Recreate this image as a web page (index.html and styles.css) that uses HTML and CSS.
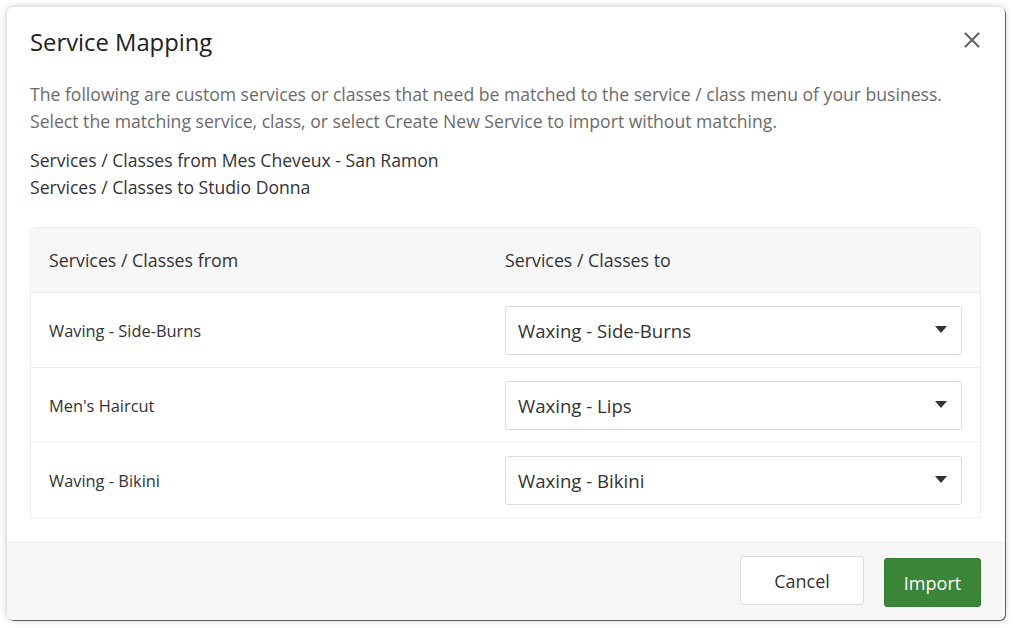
FILE: index.html
```html
<!DOCTYPE html>
<html>
<head>
  <title>Service Mapping</title>
  <link rel="stylesheet" href="styles.css">
</head>
<body>

  <div class="modal">
    <div class="modal-header">
      <h2>Service Mapping</h2>
      <button class="close" type="button" aria-label="Close">
        <svg width="16" height="16" viewBox="0 0 16 16"><path d="M1.5 1.5 L14.5 14.5 M14.5 1.5 L1.5 14.5" stroke="#666" stroke-width="2.2" stroke-linecap="round"/></svg>
      </button>
    </div>

    <div class="modal-body">
      <p class="intro">The following are custom services or classes that need be matched to the service / class menu of your business. Select the matching service, class, or select Create New Service to import without matching.</p>
      <p class="source">Services / Classes from Mes Cheveux - San Ramon<br>Services / Classes to Studio Donna</p>

      <div class="map-table">
        <div class="map-head">
          <div>Services / Classes from</div>
          <div>Services / Classes to</div>
        </div>
        <div class="map-row">
          <div>Waving - Side-Burns</div>
          <div><div class="select">Waxing - Side-Burns <span class="caret"></span></div></div>
        </div>
        <div class="map-row">
          <div>Men's Haircut</div>
          <div><div class="select">Waxing - Lips <span class="caret"></span></div></div>
        </div>
        <div class="map-row">
          <div>Waving - Bikini</div>
          <div><div class="select">Waxing - Bikini <span class="caret"></span></div></div>
        </div>
      </div>
    </div>

    <div class="modal-footer">
      <button class="btn btn-default" type="button">Cancel</button>
      <button class="btn btn-primary" type="button">Import</button>
    </div>
  </div>

</body>
</html>
```

FILE: styles.css
```css
    body {
      margin: 0;
      background: #fff;
      font-family: "Open Sans", Arial, sans-serif;
      color: #333;
    }

    .modal {
      margin: 7px;
      width: 998px;
      height: 613px;
      background: #fff;
      border-radius: 6px;
      box-shadow: 1px 1px 0 #6b615a, 0 0 6px rgba(0,0,0,0.25);
      display: flex;
      flex-direction: column;
      overflow: hidden;
    }

    .modal-header {
      display: flex;
      justify-content: space-between;
      align-items: center;
      padding: 12px 25px 0 23px;
      height: 46px;
    }

    .modal-header h2 {
      margin: 0;
      font-size: 23.8px;
      font-weight: normal;
      color: #222;
    }

    .close {
      border: none;
      background: none;
      padding: 0;
      margin-top: -2px;
      cursor: pointer;
    }

    .modal-body {
      flex: 1;
      padding: 16px 24px 0 23px;
    }

    .intro {
      margin: 0;
      font-size: 17.6px;
      line-height: 27px;
      color: #6b6b6b;
    }

    .source {
      margin: 12px 0 0;
      font-size: 17.6px;
      line-height: 27px;
      color: #333;
    }

    .map-table {
      margin-top: 26px;
      width: 949px;
      border: 1px solid #eee;
      border-radius: 6px 6px 0 0;
    }

    .map-head, .map-row {
      display: grid;
      grid-template-columns: 456px 1fr;
      align-items: center;
    }

    .map-head {
      height: 64px;
      background: #f7f7f7;
      border-radius: 6px 6px 0 0;
      font-size: 17.8px;
      color: #333;
    }

    .map-row {
      height: 74px;
      border-top: 1px solid #eee;
      font-size: 16.4px;
    }

    .map-head > div, .map-row > div {
      padding-left: 18px;
    }

    .map-row > div + div {
      padding-right: 18px;
    }

    .select {
      position: relative;
      height: 47px;
      border: 1px solid #ddd;
      border-radius: 3px;
      display: flex;
      align-items: center;
      padding-left: 12px;
      font-size: 18.6px;
      color: #333;
    }

    .caret {
      position: absolute;
      right: 14px;
      top: 19px;
      border-left: 6px solid transparent;
      border-right: 6px solid transparent;
      border-top: 7px solid #333;
    }

    .modal-footer {
      height: 77px;
      background: #f7f7f7;
      border-top: 1px solid #eee;
      display: flex;
      justify-content: flex-end;
      align-items: center;
      gap: 20px;
      padding-right: 24px;
    }

    .btn {
      height: 49px;
      border-radius: 3px;
      font-family: inherit;
      font-size: 18px;
      cursor: pointer;
      margin-top: -2px;
    }

    .btn-default {
      width: 124px;
      background: #fff;
      border: 1px solid #ddd;
      color: #333;
    }

    .btn-primary {
      width: 97px;
      background: #3b8538;
      border: 1px solid #367a33;
      color: #fff;
      margin-top: 2px;
    }
```
